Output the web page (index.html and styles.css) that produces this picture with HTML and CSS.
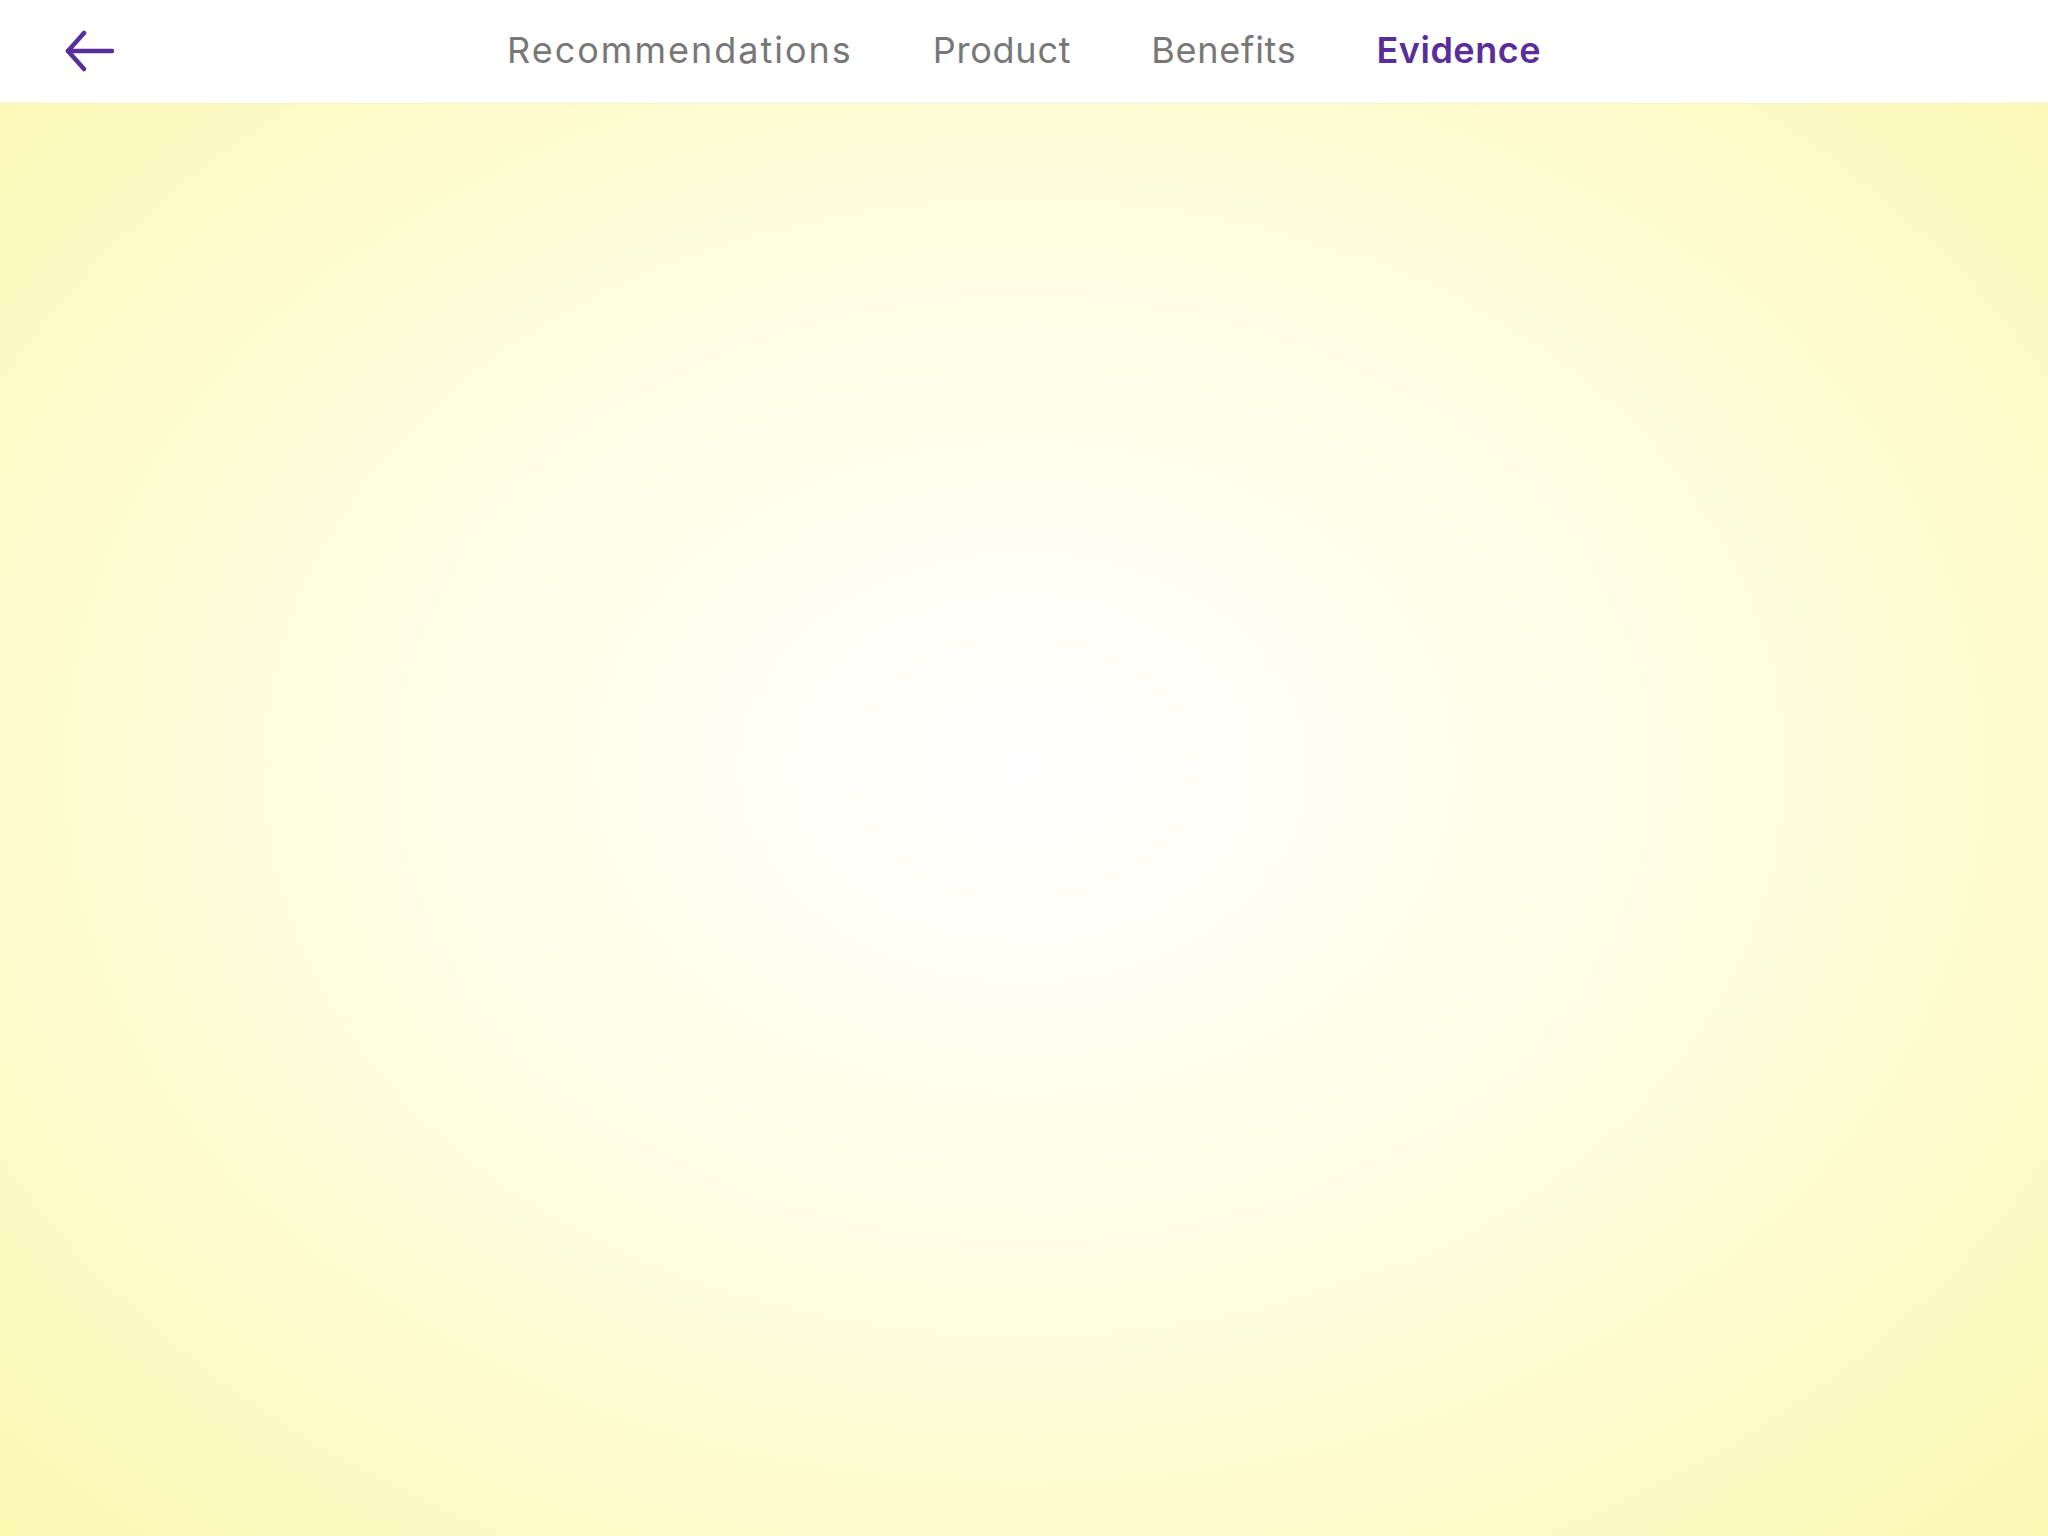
FILE: index.html
```html
<!DOCTYPE html>
<html lang="en">
<head>
<meta charset="utf-8">
<title>Evidence</title>
<link rel="stylesheet" href="styles.css">
</head>
<body>
<header class="topbar">
  <button class="back" aria-label="Back">
    <svg width="52" height="42" viewBox="0 0 52 42" fill="none" stroke="#5a2e98" stroke-width="4.5" stroke-linecap="round" stroke-linejoin="round">
      <path d="M3 21 H47"/>
      <path d="M19 3 L3 21 L19 39"/>
    </svg>
  </button>
  <nav class="tabs">
    <a class="tab tab-wide">Recommendations</a>
    <a class="tab">Product</a>
    <a class="tab">Benefits</a>
    <a class="tab active">Evidence</a>
  </nav>
</header>
<main class="content"></main>
</body>
</html>
```
FILE: styles.css
```css
html, body {
  margin: 0;
  padding: 0;
}
body {
  min-height: 100vh;
  display: flex;
  flex-direction: column;
  font-family: "Inter", "Noto Sans", sans-serif;
  background: radial-gradient(ellipse farthest-corner at 50% 50%, #ffffff 0%, #fffee8 40%, #fbf8b2 100%);
}
.topbar {
  height: 103px;
  box-sizing: border-box;
  padding-bottom: 3px;
  background: #ffffff;
  display: flex;
  align-items: center;
  justify-content: center;
  position: relative;
  box-shadow: 0 1px 2px rgba(0,0,0,0.03);
}
.back {
  position: absolute;
  left: 65px;
  top: 30px;
  padding: 0;
  border: 0;
  background: none;
  display: flex;
}
.tabs {
  display: flex;
  gap: 80px;
  align-items: center;
}
.tab {
  font-size: 36px;
  letter-spacing: 0.75px;
  color: #777777;
  text-decoration: none;
  line-height: 1;
}
.tab-wide {
  letter-spacing: 2px;
}
.tab.active {
  color: #5a2e98;
  font-weight: 600;
  letter-spacing: 0.5px;
}
.content {
  flex: 1;
}
```
